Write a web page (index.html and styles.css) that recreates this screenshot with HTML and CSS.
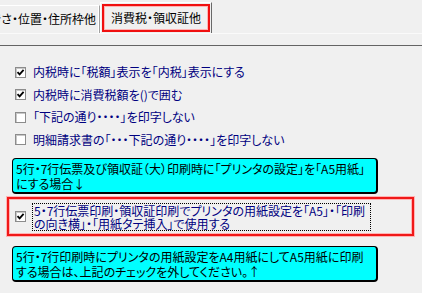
FILE: index.html
```html
<!DOCTYPE html>
<html lang="ja">
<head>
<meta charset="utf-8">
<link rel="stylesheet" href="styles.css">
</head>
<body>
<div class="tabs">
  <div class="tab tab1"><span>大きさ・位置・住所枠他</span></div>
  <div class="tab tab2"><div class="focus">消費税・領収証他</div></div>
  <div class="tabfill"></div>
</div>
<div class="sep"></div>
<div class="panel">
  <div class="row"><span class="cb"><svg viewBox="0 0 9 9" width="9" height="9"><path d="M1.5 4.2 L3.6 6.4 L7.6 1.8" fill="none" stroke="#000" stroke-width="1.8"/></svg></span><span class="lbl">内税時に「税額」表示を「内税」表示にする</span></div>
  <div class="row"><span class="cb"><svg viewBox="0 0 9 9" width="9" height="9"><path d="M1.5 4.2 L3.6 6.4 L7.6 1.8" fill="none" stroke="#000" stroke-width="1.8"/></svg></span><span class="lbl">内税時に消費税額を()で囲む</span></div>
  <div class="row"><span class="cb"></span><span class="lbl">「下記の通り・・・・」を印字しない</span></div>
  <div class="row"><span class="cb"></span><span class="lbl">明細請求書の「・・・下記の通り・・・・」を印字しない</span></div>
  <div class="note"><div>5行・7行伝票及び領収証（大）印刷時に「プリンタの設定」を「A5用紙」</div><div>にする場合↓</div></div>
  <div class="redbox">
    <span class="cb"><svg viewBox="0 0 9 9" width="9" height="9"><path d="M1.5 4.2 L3.6 6.4 L7.6 1.8" fill="none" stroke="#000" stroke-width="1.8"/></svg></span>
    <span class="lbl dotted"><span class="ln">5・7行伝票印刷・領収証印刷でプリンタの用紙設定を「A5」・「印刷</span><span class="ln">の向き横」・「用紙タテ挿入」で使用する</span></span>
  </div>
  <div class="note note2"><div>5行・7行印刷時にプリンタの用紙設定をA4用紙にしてA5用紙に印刷</div><div>する場合は、上記のチェックを外してください。↑</div></div>
</div>
</body>
</html>
```
FILE: styles.css
```css
html, body {
  margin: 0;
  padding: 0;
  background: #f0f0f0;
  width: 422px;
  height: 293px;
  overflow: hidden;
  font-family: "Noto Sans CJK JP", "DejaVu Sans", sans-serif;
  font-size: 12px;
  font-feature-settings: "palt";
  color: #000;
}

.tabs {
  display: flex;
  align-items: flex-end;
  height: 34px;
  box-sizing: border-box;
  border-bottom: 1px solid #fafafa;
}

.tab {
  box-sizing: border-box;
  white-space: nowrap;
}

.tab1 {
  width: 100px;
  height: 28px;
  display: flex;
  justify-content: flex-end;
  align-items: center;
  overflow: hidden;
  border-top: 1px solid #fff;
  border-right: 1px solid #a0a0a0;
  box-shadow: inset -1px 0 0 #fff;
  padding-right: 3px;
  padding-bottom: 2px;
}

.tab2 {
  width: 112px;
  height: 31px;
  border-left: 1px solid #fff;
  border-top: 1px solid #fff;
  border-right: 1px solid #696969;
  padding: 1px;
}

.tab2 .focus {
  box-sizing: border-box;
  height: 28px;
  border: 2px solid #f01010;
  box-shadow: inset 0 0 0 1px #ffb4b4;
  display: flex;
  align-items: center;
  justify-content: center;
  padding-bottom: 1px;
}

.tabfill {
  flex: 1;
}

.sep {
  margin-top: 11px;
  height: 1px;
  background: #646464;
}

.panel {
  padding-top: 15px;
}

.row {
  height: 22.5px;
  display: flex;
  align-items: center;
  padding-left: 15px;
}

.cb {
  box-sizing: border-box;
  width: 11px;
  height: 11px;
  background: #fff;
  border: 1px solid #8c8c8c;
  box-shadow: inset 1px 1px 0 #c8c8c8;
  display: flex;
  align-items: center;
  justify-content: center;
  flex: none;
}

.lbl {
  margin-left: 7px;
  color: #000080;
  white-space: nowrap;
  line-height: 14px;
}

.note {
  box-sizing: border-box;
  margin: 7px 0 0 12px;
  width: 366px;
  height: 36px;
  padding: 2px 3px 0 3px;
  background: #00ffff;
  border: 1px solid #000;
  border-right-width: 2px;
  border-bottom-width: 2px;
  border-radius: 4px;
  line-height: 15px;
  white-space: nowrap;
  color: #000;
}

.redbox {
  box-sizing: border-box;
  margin: 3px 0 0 7px;
  width: 407px;
  height: 39px;
  border: 2px solid #f01818;
  box-shadow: 0 0 0 1px #ffb4b4, inset 0 0 0 1px #ffb4b4;
  display: flex;
  align-items: center;
  padding-left: 6px;
}

.redbox .lbl {
  margin-left: 6px;
  padding: 0 1px 0 1px;
  width: 339px;
  box-sizing: border-box;
  display: flex;
  flex-direction: column;
  line-height: 13px;
}

.dotted {
  border: 1px dotted #000;
}

.note2 {
  margin-top: 10px;
}
```
